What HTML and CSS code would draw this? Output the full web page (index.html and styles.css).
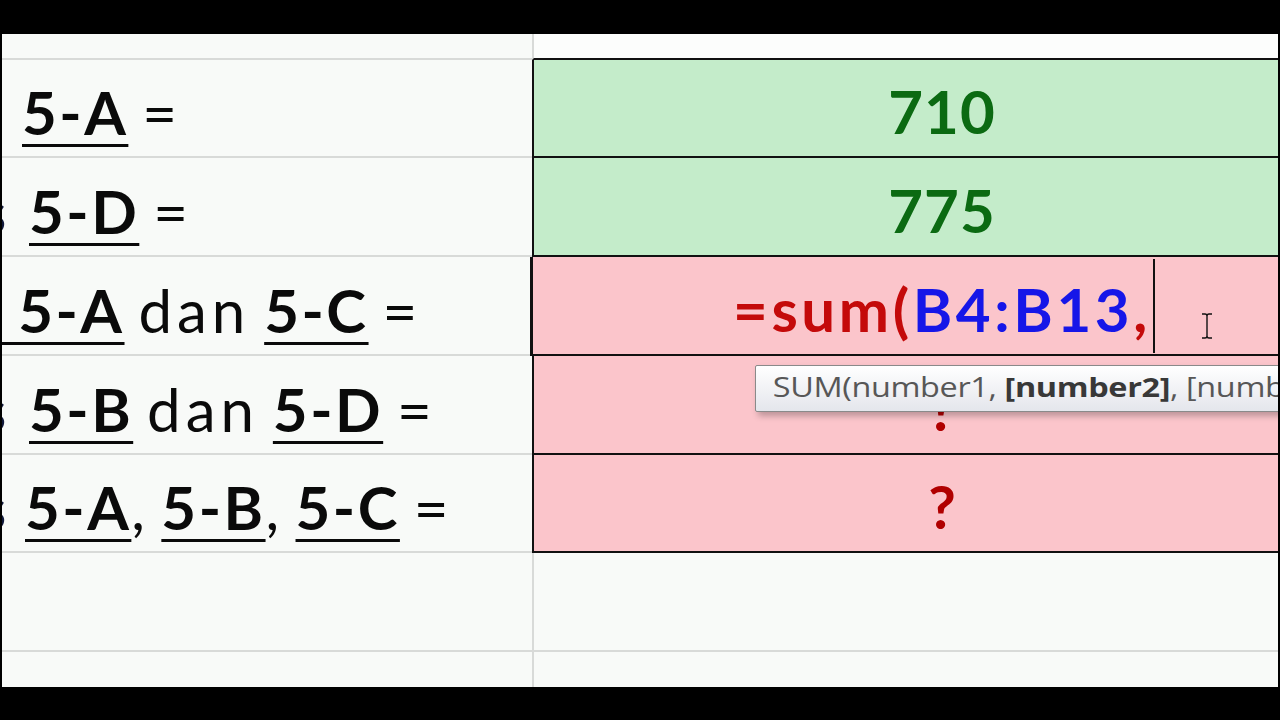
FILE: index.html
```html
<!DOCTYPE html>
<html>
<head>
<meta charset="utf-8">
<link rel="stylesheet" href="styles.css">
</head>
<body>
<div class="screen">
  <div class="sheet">
    <div class="cell label head"></div>
    <div class="cell value head-r"></div>

    <div class="cell label"><span class="txt t1"><u>5-A</u> =</span></div>
    <div class="cell value good"><span class="num">710</span></div>

    <div class="cell label"><span class="txt t2"><span class="cut">s</span><u>5-D</u> =</span></div>
    <div class="cell value good"><span class="num">775</span></div>

    <div class="cell label"><span class="txt t3"><u>&nbsp;&nbsp;5-A</u> <span class="reg">dan</span> <u>5-C</u> =</span></div>
    <div class="cell value bad active"><span class="formula"><span class="fn">=sum(</span><span class="ref">B4:B13</span><span class="fn">,</span></span><span class="caret"></span></div>

    <div class="cell label"><span class="txt t4"><span class="cut">s</span><u>5-B</u> <span class="reg">dan</span> <u>5-D</u> =</span></div>
    <div class="cell value bad"><span class="q">?</span></div>

    <div class="cell label"><span class="txt t5"><span class="cut">s</span><u>5-A</u>, <u>5-B</u>, <u>5-C</u> =</span></div>
    <div class="cell value bad"><span class="q">?</span></div>

    <div class="cell label"></div>
    <div class="cell value"></div>

    <div class="cell label"></div>
    <div class="cell value"></div>
  </div>

  <div class="tooltip"><span class="tip-text">SUM(number1, <b>[number2]</b>, [number3], ...)</span></div>

  <svg class="ibeam" width="12" height="26" viewBox="0 0 12 26">
    <path d="M1 1 H4 Q6 1 6 3 V23 Q6 25 4 25 H1 M11 1 H8 Q6 1 6 3 M6 23 Q6 25 8 25 H11" fill="none" stroke="#111" stroke-width="1.4"/>
  </svg>
</div>
</body>
</html>
```

FILE: styles.css
```css
html, body {
  margin: 0;
  padding: 0;
  background: #000;
  width: 1280px;
  height: 720px;
  overflow: hidden;
}

.screen {
  position: relative;
  margin: 34px 0 0 2px;
  width: 1276px;
  height: 653px;
  overflow: hidden;
  background: #f8faf8;
}

.sheet {
  display: grid;
  grid-template-columns: 530px 818px;
  grid-template-rows: 26px 98px 99px 99px 99px 98px 99px 99px;
}

.cell {
  box-sizing: border-box;
  border-bottom: 2px solid #d8dad8;
  display: flex;
  align-items: center;
  overflow: hidden;
  white-space: nowrap;
}

.value {
  border-left: 2px solid #d8dad8;
  justify-content: center;
}

.head-r {
  background: #fcfdfc;
  border-bottom: 2px solid #111;
}

.good {
  background: #c4ecca;
  border-left: 2px solid #111;
  border-bottom: 2px solid #111;
}

.bad {
  background: #fbc5cb;
  border-left: 2px solid #111;
  border-bottom: 2px solid #111;
}

.active {
  border-left: 3px solid #111;
  margin-left: -2px;
  justify-content: flex-start;
  padding-left: 200px;
  position: relative;
}

.txt {
  font-family: "Lato", "Liberation Sans", sans-serif;
  font-size: 60px;
  color: #0a0a0a;
  font-weight: 400;
  letter-spacing: 2.5px;
  word-spacing: -4px;
  padding-top: 8px;
}

.txt u {
  font-weight: 700;
  text-decoration-thickness: 3px;
  text-underline-offset: 9px;
}

.reg {
  letter-spacing: 5px;
}

.cut {
  display: inline-block;
  width: 6px;
  overflow: hidden;
  direction: rtl;
  font-weight: 700;
  color: #10183a;
  letter-spacing: 0;
  vertical-align: bottom;
}

.t1 { margin-left: 20px; }
.t2 { margin-left: -2px; }
.t2 .cut, .t4 .cut { margin-right: 23px; }
.t3 { margin-left: -10px; }
.t4 { margin-left: -2px; }
.t5 { margin-left: -2px; }
.t5 .cut { margin-right: 19px; }

.num, .q, .formula {
  font-family: "Lato", "Liberation Sans", sans-serif;
  font-weight: 700;
  font-size: 60px;
  padding-top: 6px;
}

.num {
  color: #0b6a12;
  letter-spacing: 1px;
}

.q {
  color: #b00000;
}

.formula {
  letter-spacing: 3.6px;
}

.formula .fn {
  color: #c40a0a;
}

.formula .ref {
  color: #1616e8;
}

.caret {
  display: inline-block;
  width: 2px;
  height: 94px;
  background: #111;
  margin-left: 2px;
}

.tooltip {
  position: absolute;
  left: 753px;
  top: 331px;
  width: 600px;
  height: 47px;
  box-sizing: border-box;
  border: 1.5px solid #8a8a8a;
  border-radius: 2px;
  background: linear-gradient(#ffffff, #e4e6ec);
  box-shadow: 3px 4px 6px rgba(0, 0, 0, 0.25);
  white-space: nowrap;
  overflow: hidden;
}

.tip-text {
  display: inline-block;
  font-family: "Open Sans", "DejaVu Sans", sans-serif;
  font-size: 27px;
  line-height: 42px;
  color: #575757;
  padding-left: 14px;
  transform: scaleX(1.2);
  transform-origin: left center;
  letter-spacing: -0.3px;
}

.tip-text b {
  color: #383838;
}

.ibeam {
  position: absolute;
  left: 1199px;
  top: 279px;
}
```
